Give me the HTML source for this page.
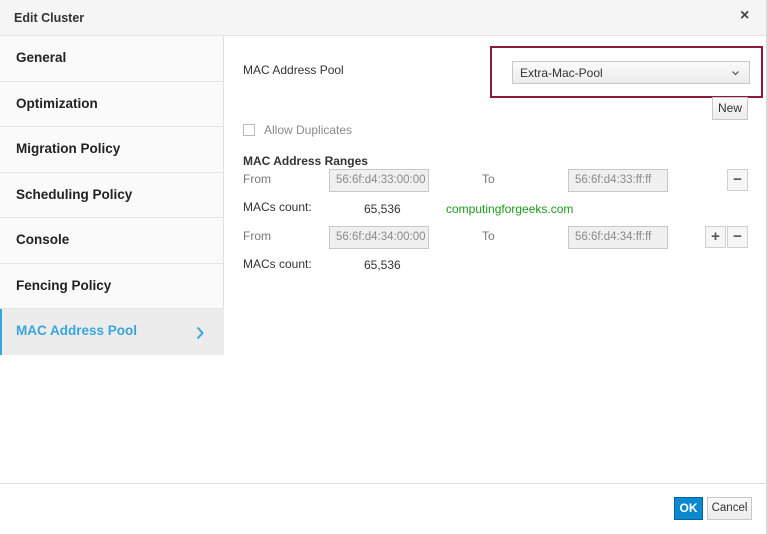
<!DOCTYPE html>
<html><head><style>
*{margin:0;padding:0;box-sizing:border-box}
body{width:768px;height:534px;overflow:hidden;background:#fff;font-family:"Liberation Sans",sans-serif;color:#363636;position:relative;font-size:12px}
.a{position:absolute}
.hdr{left:0;top:0;width:766px;height:36px;background:#f5f5f5;border-bottom:1px solid #e6e6e6}
.side{left:0;top:36px;width:224px;height:319px;background:#fafafa;border-right:1px solid #e0e0e0}
.it{position:absolute;left:0;width:224px;height:45.5px;border-bottom:1px solid #e4e4e4;font-weight:bold;font-size:13.5px;padding:14px 0 0 16px;color:#222}
.inp{position:absolute;height:23px;width:100px;border:1px solid #c8c8c8;background:#f0f0f0;color:#8a8a8a;font-size:11.5px;padding:4px 0 0 6px;white-space:nowrap;overflow:hidden}
.btn{position:absolute;width:21px;height:22px;border:1px solid #d0d0d0;background:#f6f6f6;color:#555;text-align:center;font-size:15px;font-weight:bold;line-height:19px}
.lbl{position:absolute;color:#555;font-size:12px}
</style></head><body>
<div class="a hdr"></div>
<div class="a" style="left:14px;top:11px;font-weight:bold;font-size:12.5px;color:#333">Edit Cluster</div>
<div class="a" style="left:740px;top:7px;font-size:16px;color:#444;font-weight:bold">×</div>
<div class="a" style="left:766px;top:0;width:2px;height:534px;background:#d8d8d8"></div>
<div class="a side">
<div class="it" style="top:0">General</div>
<div class="it" style="top:45.5px">Optimization</div>
<div class="it" style="top:91px">Migration Policy</div>
<div class="it" style="top:136.5px">Scheduling Policy</div>
<div class="it" style="top:182px">Console</div>
<div class="it" style="top:227.5px">Fencing Policy</div>
<div class="it" style="top:273px;background:#ececec;color:#39a5dc;border-left:2px solid #39a5dc;padding-left:14px;border-bottom:none">MAC Address Pool<svg style="position:absolute;left:194px;top:17px" width="8" height="14" viewBox="0 0 8 14"><path d="M1.5 1.5 L6.5 7 L1.5 12.5" fill="none" stroke="#39a5dc" stroke-width="2"/></svg></div>
</div>
<div class="lbl" style="left:243px;top:63px;color:#333">MAC Address Pool</div>
<div class="a" style="left:490px;top:46px;width:273px;height:52px;border:2px solid #8b1a3a"></div>
<div class="a" style="left:512px;top:61px;width:238px;height:23px;border:1px solid #c8c8c8;background:linear-gradient(#fafafa,#ececec);font-size:12px;color:#333;padding:4px 0 0 7px">Extra-Mac-Pool<svg style="position:absolute;right:10px;top:9px" width="7" height="5" viewBox="0 0 7 5"><path d="M0.5 0.5 L3.5 3.5 L6.5 0.5" fill="none" stroke="#444" stroke-width="1"/></svg></div>
<div class="a" style="left:712px;top:97px;width:36px;height:23px;border:1px solid #c8c8c8;background:linear-gradient(#fafafa,#ececec);font-size:12px;color:#333;text-align:center;line-height:21px">New</div>
<div class="a" style="left:243px;top:124px;width:12px;height:12px;border:1px solid #bbb;background:#fff"></div>
<div class="lbl" style="left:264px;top:123px;color:#8a8a8a">Allow Duplicates</div>
<div class="a" style="left:243px;top:154px;font-weight:bold;font-size:12px;color:#333">MAC Address Ranges</div>
<div class="lbl" style="left:243px;top:172px;color:#777">From</div>
<div class="inp" style="left:329px;top:169px">56:6f:d4:33:00:00</div>
<div class="lbl" style="left:482px;top:172px;color:#777">To</div>
<div class="inp" style="left:568px;top:169px">56:6f:d4:33:ff:ff</div>
<div class="btn" style="left:727px;top:169px">−</div>
<div class="lbl" style="left:243px;top:200px;color:#333">MACs count:</div>
<div class="lbl" style="left:364px;top:202px;color:#333">65,536</div>
<div class="a" style="left:446px;top:202px;color:#1a9a1a;font-size:12px">computingforgeeks.com</div>
<div class="lbl" style="left:243px;top:229px;color:#777">From</div>
<div class="inp" style="left:329px;top:226px">56:6f:d4:34:00:00</div>
<div class="lbl" style="left:482px;top:229px;color:#777">To</div>
<div class="inp" style="left:568px;top:226px">56:6f:d4:34:ff:ff</div>
<div class="btn" style="left:705px;top:226px">+</div>
<div class="btn" style="left:727px;top:226px">−</div>
<div class="lbl" style="left:243px;top:257px;color:#333">MACs count:</div>
<div class="lbl" style="left:364px;top:258px;color:#333">65,536</div>
<div class="a" style="left:0;top:483px;width:766px;height:1px;background:#ddd"></div>
<div class="a" style="left:674px;top:497px;width:29px;height:23px;background:#0b88ce;border:1px solid #00659c;color:#fff;font-weight:bold;font-size:12px;text-align:center;line-height:21px">OK</div>
<div class="a" style="left:707px;top:497px;width:45px;height:23px;border:1px solid #c8c8c8;background:linear-gradient(#fafafa,#ececec);color:#333;font-size:11.5px;text-align:center;line-height:21px">Cancel</div>
</body></html>
